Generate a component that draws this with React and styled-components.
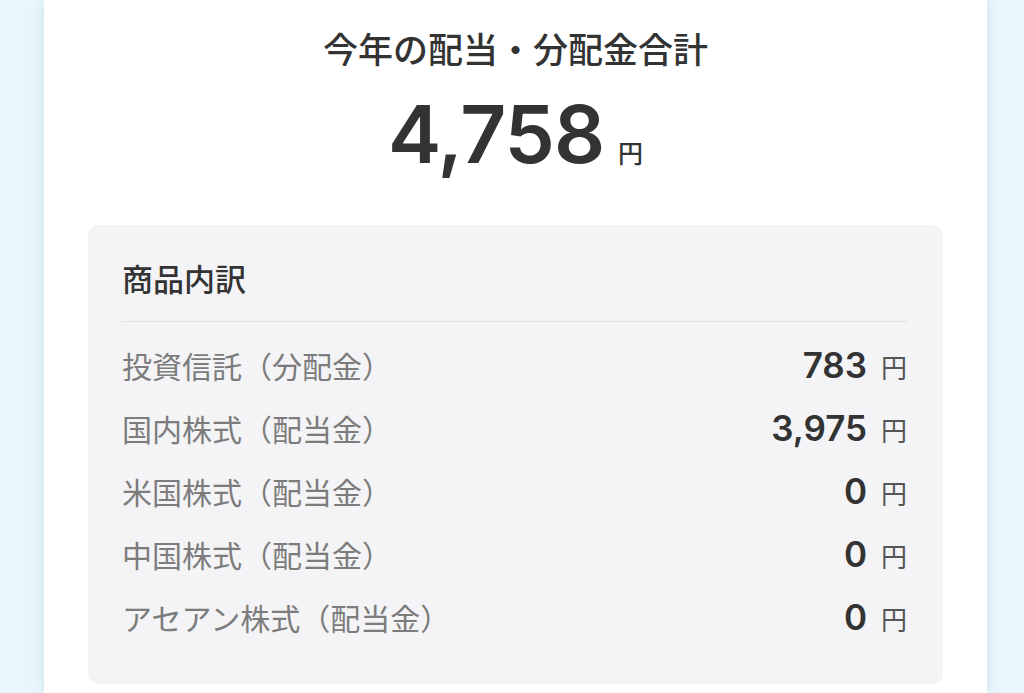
import React from 'react';
import styled, { createGlobalStyle } from 'styled-components';

const rows = [
  { label: '投資信託（分配金）', value: '783' },
  { label: '国内株式（配当金）', value: '3,975' },
  { label: '米国株式（配当金）', value: '0' },
  { label: '中国株式（配当金）', value: '0' },
  { label: 'アセアン株式（配当金）', value: '0' },
];

const App = () => {
  return (
    <>
      <GlobalStyle />
      <Page>
        <Card>
          <Title>今年の配当・分配金合計</Title>
          <Total>
            <TotalNumber>4,758</TotalNumber>
            <TotalUnit>円</TotalUnit>
          </Total>
          <Breakdown>
            <BreakdownTitle>商品内訳</BreakdownTitle>
            <Divider />
            {rows.map((row) => (
              <Row key={row.label}>
                <Label>{row.label}</Label>
                <Value>
                  <Amount>{row.value}</Amount>
                  <Unit>円</Unit>
                </Value>
              </Row>
            ))}
          </Breakdown>
        </Card>
      </Page>
    </>
  );
};

// --- Global ---

const GlobalStyle = createGlobalStyle`
  html, body {
    margin: 0;
    padding: 0;
    background: #e9f7fd;
    font-family: 'Noto Sans CJK JP', 'Noto Sans', sans-serif;
    overflow: hidden;
  }
`;

// --- Styled Components ---

const Page = styled.div`
  display: flex;
  padding: 0 37px 0 44px;
  height: 693px;
`;

const Card = styled.div`
  flex: 1;
  background: #ffffff;
  box-shadow: 0 0 12px rgba(70, 120, 150, 0.18);
  padding: 24px 44px 0;
  display: flex;
  flex-direction: column;
`;

const Title = styled.div`
  text-align: center;
  font-size: 35px;
  line-height: 48px;
  font-weight: 500;
  color: #333333;
`;

const Total = styled.div`
  margin-top: 22px;
  text-align: center;
  line-height: 1;
  color: #333333;
`;

const TotalNumber = styled.span`
  font-family: Inter, 'Liberation Sans', sans-serif;
  font-size: 80px;
  font-weight: 600;
  letter-spacing: -1px;
`;

const TotalUnit = styled.span`
  margin-left: 14px;
  font-size: 25px;
  font-weight: 500;
`;

const Breakdown = styled.div`
  margin-top: 51px;
  background: #f4f4f6;
  border-radius: 10px;
  padding: 31px 36px 36px 34px;
`;

const BreakdownTitle = styled.div`
  font-size: 31px;
  line-height: 43px;
  font-weight: 500;
  color: #333333;
`;

const Divider = styled.div`
  height: 1px;
  background: #e2e2e4;
  margin: 22px 0 11px;
`;

const Row = styled.div`
  display: flex;
  align-items: center;
  justify-content: space-between;
  height: 63px;
`;

const Label = styled.span`
  font-size: 30px;
  color: #7c7c7c;
`;

const Value = styled.span`
  display: flex;
  align-items: baseline;
  gap: 14px;
`;

const Amount = styled.span`
  font-family: Inter, 'Liberation Sans', sans-serif;
  font-size: 35px;
  font-weight: 600;
  color: #333333;
`;

const Unit = styled.span`
  font-size: 26px;
  color: #555555;
`;

export default App;
